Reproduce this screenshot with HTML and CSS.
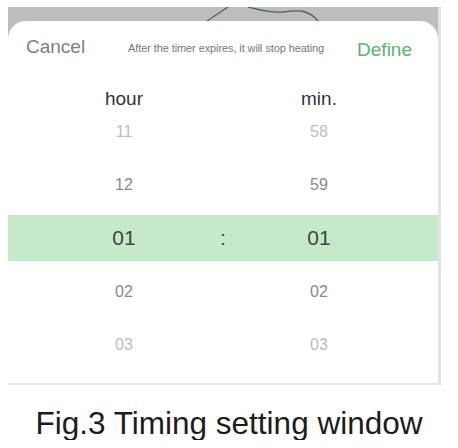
FILE: index.html
```html
<!DOCTYPE html>
<html>
<head>
<meta charset="utf-8">
<link rel="stylesheet" href="styles.css">
</head>
<body>
<div class="page">
  <div class="device">
    <div class="band">
      <svg class="sketch" width="430" height="14" viewBox="0 0 430 14">
        <path d="M199 14 L220 0" stroke="#4a675a" stroke-width="1.3" fill="none"/>
        <path d="M240 0 C252 3 262 6 275 5 C290 3 300 2 310 14" stroke="#4a675a" stroke-width="1.3" fill="none"/>
      </svg>
    </div>
    <div class="sheet">
      <div class="header">
        <span class="cancel">Cancel</span>
        <span class="subtitle">After the timer expires, it will stop heating</span>
        <span class="define">Define</span>
      </div>
      <div class="cols labels">
        <span>hour</span>
        <span></span>
        <span>min.</span>
      </div>
      <div class="cols row far"><span>11</span><span></span><span>58</span></div>
      <div class="cols row near"><span>12</span><span></span><span>59</span></div>
      <div class="cols row sel"><span>01</span><span>:</span><span>01</span></div>
      <div class="cols row near"><span>02</span><span></span><span>02</span></div>
      <div class="cols row far"><span>03</span><span></span><span>03</span></div>
    </div>
  </div>
  <div class="caption">Fig.3 Timing setting window</div>
</div>
</body>
</html>
```
FILE: styles.css
```css
html, body {
  margin: 0;
  background: #ffffff;
  font-family: "Liberation Sans", Arial, sans-serif;
}
.page {
  padding-top: 7px;
  padding-left: 8px;
}
.device {
  width: 430px;
  background: #bdbdbd;
  border-right: 3px solid #e3e3e3;
  border-bottom: 2px solid #e6e6e6;
}
.band {
  height: 14px;
  display: flex;
}
.sketch {
  display: block;
}
.sheet {
  background: #ffffff;
  border-radius: 18px 18px 0 0;
  height: 362px;
}
.header {
  height: 50px;
  display: flex;
  align-items: flex-start;
  justify-content: space-between;
  padding: 0 26px 0 18px;
  box-sizing: border-box;
}
.cancel {
  font-size: 19px;
  line-height: 19px;
  margin-top: 16px;
  color: #808080;
}
.subtitle {
  font-size: 11px;
  line-height: 11px;
  margin-top: 22px;
  margin-left: 10px;
  color: #777777;
  letter-spacing: -0.1px;
}
.define {
  font-size: 19px;
  line-height: 19px;
  margin-top: 19px;
  color: #5cb36f;
}
.cols {
  display: grid;
  grid-template-columns: 152px 46px 146px;
  padding-left: 40px;
  text-align: center;
}
.labels {
  height: 34px;
  box-sizing: border-box;
  padding-top: 18px;
  font-size: 19px;
  line-height: 19px;
  color: #333333;
}
.row {
  height: 53px;
  line-height: 53px;
  font-size: 16px;
}
.row.far { color: #bdbdbd; }
.row.near { color: #8a8a8a; }
.row.sel {
  height: 46px;
  line-height: 46px;
  margin: 4px 0;
  font-size: 21px;
  background: #c6e9ca;
  color: #3b4a3e;
}
.caption {
  margin-top: 23px;
  padding-right: 8px;
  text-align: center;
  font-size: 31.5px;
  line-height: 31.5px;
  color: #1c1c1c;
}
```
